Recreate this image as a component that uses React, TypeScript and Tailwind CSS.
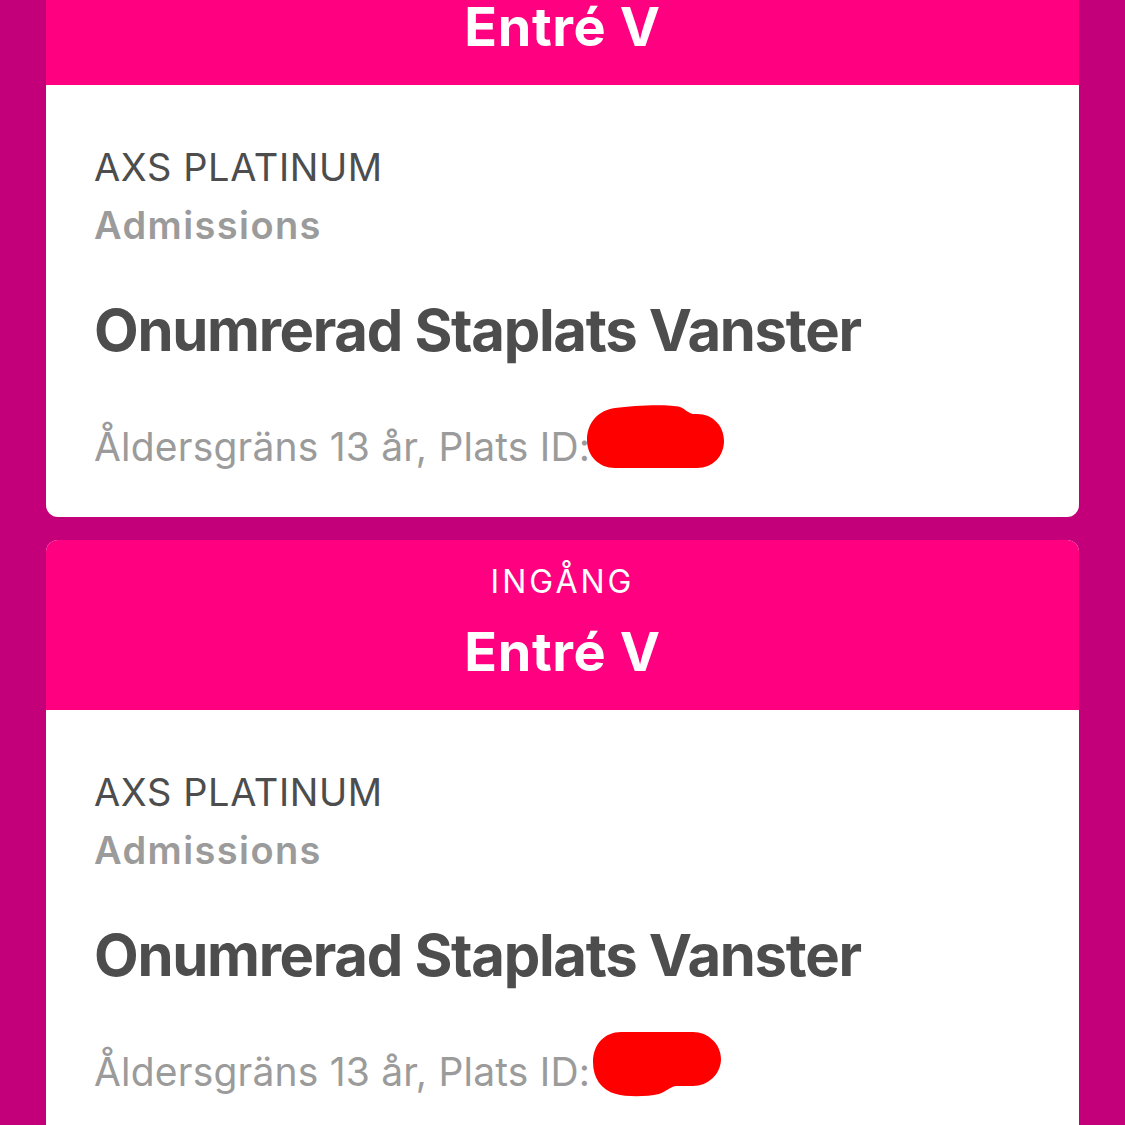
import React from "react";

const Blob = ({ variant }: { variant: 1 | 2 }) =>
  variant === 1 ? (
    <svg className="absolute left-[-5px] top-[-57px]" width="140" height="66" viewBox="0 0 140 66">
      <path
        d="M30 4 C50 1 85 0 95 3 C100 5 103 9 108 10 L112 10 C128 10 139 22 139 37 C139 52 128 64 112 64 L30 64 C14 64 2 52 2 36 C2 18 14 6 30 4 Z"
        fill="#ff0000"
      />
    </svg>
  ) : (
    <svg className="absolute left-[1px] top-[-56px]" width="132" height="68" viewBox="0 0 132 68">
      <path
        d="M30 2 L102 2 C117 2 130 14 130 29 C130 44 117 56 102 56 L85 56 C78 57 75 62 68 64 C55 67 35 67 25 64 C10 60 2 48 2 32 C2 14 14 2 30 2 Z"
        fill="#ff0000"
      />
    </svg>
  );

const TicketCard = ({ blob }: { blob: 1 | 2 }) => (
  <div className="overflow-hidden rounded-[12px] bg-white">
    <div className="flex h-[170px] flex-col items-center bg-[#fe0080] pt-[24px] text-white">
      <p className="text-[32px] leading-[36px] tracking-[3px]">INGÅNG</p>
      <p className="mt-[20px] text-[54px] font-bold leading-[64px] tracking-[0.6px]">Entré V</p>
    </div>
    <div className="h-[432px] px-[48px] pt-[58px]">
      <p className="text-[38px] leading-[48px] tracking-[0.6px] text-[#4d4d4d]">AXS PLATINUM</p>
      <p className="mt-[10px] text-[38px] font-semibold leading-[48px] tracking-[1.4px] text-[#9b9b9b]">
        Admissions
      </p>
      <p className="mt-[46px] text-[58px] font-bold leading-[70px] tracking-[-1.3px] text-[#4d4d4d]">
        Onumrerad Staplats Vanster
      </p>
      <p className="mt-[58px] text-[39px] leading-[48px] tracking-[0.2px] text-[#9b9b9b]">
        Åldersgräns 13 år, Plats ID:
        <span className="relative inline-block w-0">
          <Blob variant={blob} />
        </span>
      </p>
    </div>
  </div>
);

export default function App() {
  return (
    <div className="h-[1125px] overflow-hidden bg-[#c3007a] font-[Inter,sans-serif]">
      <div className="-mt-[85px] flex flex-col gap-[23px] px-[46px]">
        <TicketCard blob={1} />
        <TicketCard blob={2} />
      </div>
    </div>
  );
}
